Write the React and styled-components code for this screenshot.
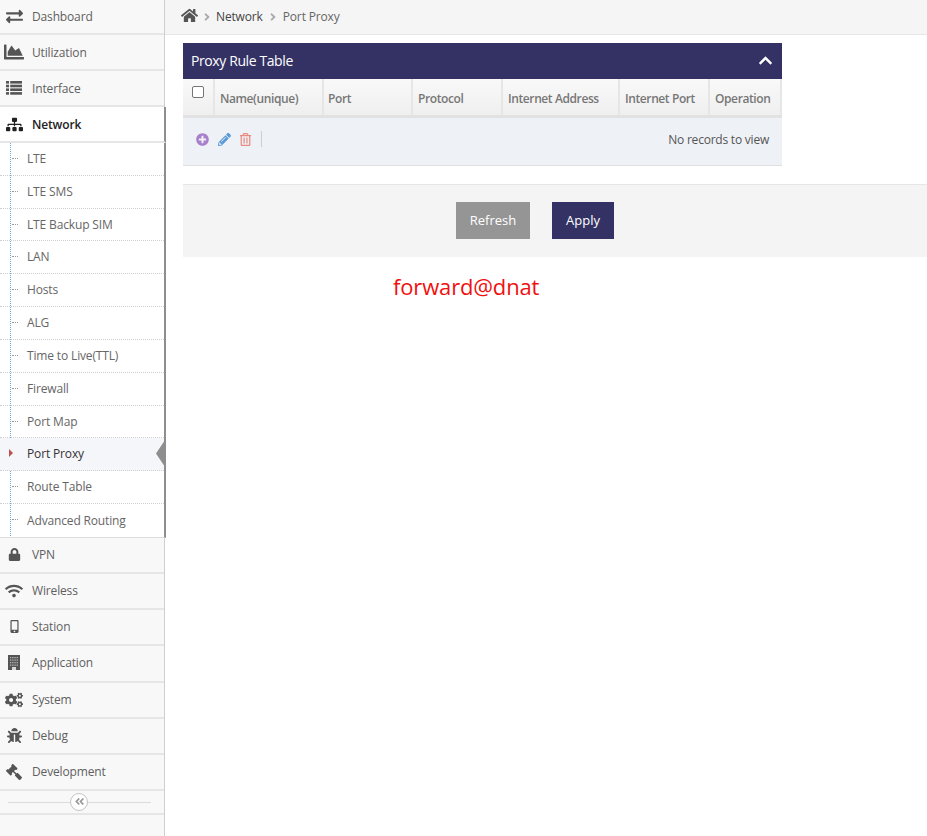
import React from 'react';
import styled, { createGlobalStyle } from 'styled-components';
import { FaExchangeAlt, FaChartArea, FaSitemap, FaLock, FaWifi, FaMobileAlt, FaCogs, FaBug, FaGavel, FaAngleDoubleLeft, FaAngleRight, FaHome, FaPlusCircle, FaPencilAlt, FaRegTrashAlt, FaChevronUp } from 'react-icons/fa';

const Global = createGlobalStyle`
  html, body { margin: 0; padding: 0; background: #fff; }
  body { font-family: "Open Sans", "Noto Sans", sans-serif; font-size: 12px; color: #555; letter-spacing: -0.15px; }
  * { box-sizing: border-box; }
`;

const Page = styled.div`
  display: flex;
  width: 927px;
  height: 836px;
  overflow: hidden;
`;
const Sidebar = styled.nav`
  width: 165px;
  flex: none;
  background: #f8f8f8;
  border-right: 1px solid #cfcfcf;
  display: flex;
  flex-direction: column;
`;
const MenuItem = styled.div`
  height: ${p => p.$h || 36}px;
  padding-bottom: ${p => p.$h === 37 ? 2 : 0}px;
  margin-right: ${p => p.$active ? '-2px' : '0'};
  display: flex;
  align-items: center;
  border-bottom: 2px solid #e6e6e6;
  background: ${p => p.$active ? '#fff' : 'transparent'};
  border-right: ${p => p.$active ? '2px solid #8e8e8e' : '0'};
  color: ${p => p.$active ? '#222' : '#5f5f5f'};
  font-weight: ${p => p.$active ? 600 : 400};
`;
const MenuIcon = styled.span`
  width: 28px;
  margin-right: 4px;
  flex: none;
  display: flex;
  justify-content: center;
  color: ${p => p.$active ? '#222' : '#555'};
  font-size: ${p => p.$size || 16}px;
  transform: ${p => p.$flip ? 'scaleX(-1)' : 'none'};
`;
const SubMenu = styled.div`
  margin-right: -2px;
  border-right: 2px solid #8e8e8e;
  border-bottom: 1px solid #dcdcdc;
  background-color: #fff;
  background-image: linear-gradient(#6fa8d8 50%, transparent 50%);
  background-size: 1px 2px;
  background-position: 10px 0;
  background-repeat: repeat-y;
`;
const SubItem = styled.div`
  position: relative;
  height: 32.83px;
  padding: 0 0 1px 27px;
  display: flex;
  align-items: center;
  border-bottom: ${p => p.$last ? '0' : '1px dotted #d0d0d0'};
  background: ${p => p.$active ? '#f5f6fa' : 'transparent'};
  color: ${p => p.$active ? '#333' : '#666'};
  &::before {
    content: '';
    position: absolute;
    left: 12px;
    top: 15px;
    width: 6px;
    border-top: 1px dotted #999;
    display: ${p => p.$active ? 'none' : 'block'};
  }
`;
const Caret = styled.span`
  position: absolute;
  left: 9px;
  top: 11px;
  border-left: 4px solid #c0504d;
  border-top: 4px solid transparent;
  border-bottom: 4px solid transparent;
`;
const Notch = styled.span`
  position: absolute;
  right: 0;
  top: 3px;
  width: 8px;
  height: 24px;
  background: #8e8e8e;
  clip-path: polygon(100% 0, 0 50%, 100% 100%);
`;
const Collapse = styled.div`
  position: relative;
  height: 24px;
  border-bottom: 2px solid #e6e6e6;
  display: flex;
  align-items: center;
  justify-content: center;
  &::before {
    content: '';
    position: absolute;
    left: 8px;
    right: 13px;
    top: 11px;
    border-top: 1px solid #dcdcdc;
  }
`;
const CollapseBtn = styled.span`
  position: relative;
  width: 18px;
  height: 18px;
  margin-right: 6px;
  border-radius: 50%;
  background: #fff;
  border: 1px solid #c4c4c4;
  color: #999;
  font-size: 11px;
  display: flex;
  align-items: center;
  justify-content: center;
`;
const Main = styled.main`
  flex: 1;
  min-width: 0;
  display: flex;
  flex-direction: column;
`;
const Breadcrumb = styled.div`
  height: 35px;
  background: #f5f5f5;
  border-bottom: 1px solid #e6e6e6;
  padding: 0 0 1px 16px;
  display: flex;
  align-items: center;
  color: #444;
`;
const HomeIcon = styled(FaHome)`
  font-size: 17px;
  color: #555;
  margin-bottom: 3px;
`;
const Sep = styled.span`
  display: flex;
  color: #aaa;
  font-size: 12px;
  margin: ${p => p.$m || '0 3px'};
`;
const CrumbLast = styled.span`
  color: #666;
`;
const Panel = styled.section`
  width: 599px;
  margin: 8px 0 0 18px;
`;
const PanelHeader = styled.div`
  height: 36px;
  background: #343264;
  color: #fff;
  display: flex;
  align-items: center;
  justify-content: space-between;
  padding: 0 9px 2px 8px;
  font-size: 14px;
  letter-spacing: -0.4px;
`;
const HeadRow = styled.div`
  height: 39px;
  display: grid;
  grid-template-columns: 32px 109px 89px 90px 117px 90px 72px;
  background: linear-gradient(#f9f9f9, #efefef);
  border-bottom: 3px solid #e2e2e2;
`;
const HeadCell = styled.div`
  border-right: 2px solid #e6e6e6;
  padding: 3px 0 0 ${p => p.$pad || 5}px;
  display: flex;
  align-items: center;
  font-weight: 600;
  color: #777;
  white-space: nowrap;
  letter-spacing: -0.4px;
`;
const CheckCell = styled.div`
  border-right: 2px solid #e6e6e6;
  padding: 7px 0 0 9px;
`;
const CheckBox = styled.span`
  display: block;
  width: 12px;
  height: 12px;
  background: #fff;
  border: 1px solid #767676;
  border-radius: 2px;
`;
const Toolbar = styled.div`
  height: 48px;
  background: #eef1f6;
  border-bottom: 1px solid #dfdfdf;
  display: flex;
  align-items: center;
  padding: 0 13px 5px 13px;
  gap: 8.5px;
`;
const ToolDivider = styled.span`
  width: 1px;
  height: 16px;
  background: #c8ced6;
`;
const NoRecords = styled.span`
  margin-left: auto;
  color: #555;
  letter-spacing: -0.22px;
`;
const Actions = styled.div`
  margin-top: 18px;
  height: 73px;
  margin-left: 18px;
  padding: 0 0 2px 273px;
  background: #f4f4f4;
  border-top: 1px solid #e6e6e6;
  display: flex;
  align-items: center;
  gap: 22px;
`;
const Button = styled.button`
  height: 37px;
  width: ${p => p.$w}px;
  border: 0;
  background: ${p => p.$primary ? '#343264' : '#959595'};
  color: #fff;
  font: 13px "Open Sans", sans-serif;
`;
const Note = styled.div`
  margin: 15px 0 0 228px;
  color: #f01010;
  font-size: 22px;
  line-height: 28px;
  letter-spacing: -0.15px;
`;

const ListIcon = () => (
  <svg width="16" height="14" viewBox="0 0 16 14" fill="currentColor">
    <rect x="0" y="0" width="3" height="2.6" /><rect x="4.2" y="0" width="11.8" height="2.6" />
    <rect x="0" y="3.7" width="3" height="2.6" /><rect x="4.2" y="3.7" width="11.8" height="2.6" />
    <rect x="0" y="7.4" width="3" height="2.6" /><rect x="4.2" y="7.4" width="11.8" height="2.6" />
    <rect x="0" y="11.1" width="3" height="2.6" /><rect x="4.2" y="11.1" width="11.8" height="2.6" />
  </svg>
);

const windowRows = [2, 4.5, 7, 9.5];
const windowCols = [2, 4.2, 6.4, 8.6];
const BuildingIcon = () => (
  <svg width="12" height="15" viewBox="0 0 12 15">
    <rect width="12" height="15" fill="currentColor" />
    {windowRows.flatMap(y => windowCols.map(x => (
      <rect key={`${x}-${y}`} x={x} y={y} width="1.3" height="1.3" fill="#b5b5b5" />
    )))}
    <rect x="4" y="12" width="4" height="3" fill="#d8d8d8" />
  </svg>
);

const top = [
  { t: 'Dashboard', i: <FaExchangeAlt />, s: 17, h: 35 },
  { t: 'Utilization', i: <FaChartArea />, s: 20 },
  { t: 'Interface', i: <ListIcon />, s: 16 },
];
const subs = ['LTE', 'LTE SMS', 'LTE Backup SIM', 'LAN', 'Hosts', 'ALG', 'Time to Live(TTL)', 'Firewall', 'Port Map', 'Port Proxy', 'Route Table', 'Advanced Routing'];
const bottom = [
  { t: 'VPN', i: <FaLock />, s: 13 },
  { t: 'Wireless', i: <FaWifi />, s: 18 },
  { t: 'Station', i: <FaMobileAlt />, s: 13 },
  { t: 'Application', i: <BuildingIcon />, s: 16, h: 37 },
  { t: 'System', i: <FaCogs />, s: 18 },
  { t: 'Debug', i: <FaBug />, s: 15 },
  { t: 'Development', i: <FaGavel />, s: 16, flip: true },
];
const cols = [['Name(unique)', 5], ['Port', 4], ['Protocol', 5], ['Internet Address', 5], ['Internet Port', 5], ['Operation', 5]];

export default function App() {
  return (
    <Page>
      <Global />
      <Sidebar>
        {top.map(({ t, i, s, h }) => (
          <MenuItem key={t} $h={h}><MenuIcon $size={s}>{i}</MenuIcon>{t}</MenuItem>
        ))}
        <MenuItem $active><MenuIcon $active $size={17}><FaSitemap /></MenuIcon>Network</MenuItem>
        <SubMenu>
          {subs.map((t, i) => (
            <SubItem key={t} $active={t === 'Port Proxy'} $last={i === subs.length - 1}>
              {t === 'Port Proxy' && <Caret />}
              {t}
              {t === 'Port Proxy' && <Notch />}
            </SubItem>
          ))}
        </SubMenu>
        {bottom.map(({ t, i, s, h, flip }) => (
          <MenuItem key={t} $h={h}><MenuIcon $size={s} $flip={flip}>{i}</MenuIcon>{t}</MenuItem>
        ))}
        <Collapse><CollapseBtn><FaAngleDoubleLeft /></CollapseBtn></Collapse>
      </Sidebar>
      <Main>
        <Breadcrumb>
          <HomeIcon />
          <Sep><FaAngleRight /></Sep>
          <span>Network</span>
          <Sep $m="0 4px"><FaAngleRight /></Sep>
          <CrumbLast>Port Proxy</CrumbLast>
        </Breadcrumb>
        <Panel>
          <PanelHeader>Proxy Rule Table<FaChevronUp size={15} /></PanelHeader>
          <HeadRow>
            <CheckCell><CheckBox /></CheckCell>
            {cols.map(([c, p]) => <HeadCell key={c} $pad={p}>{c}</HeadCell>)}
          </HeadRow>
          <Toolbar>
            <FaPlusCircle size={13} color="#a97fcb" />
            <FaPencilAlt size={13} color="#5b9bd5" />
            <FaRegTrashAlt size={13} color="#e88a80" />
            <ToolDivider />
            <NoRecords>No records to view</NoRecords>
          </Toolbar>
        </Panel>
        <Actions>
          <Button $w={74}>Refresh</Button>
          <Button $primary $w={62}>Apply</Button>
        </Actions>
        <Note>forward@dnat</Note>
      </Main>
    </Page>
  );
}
